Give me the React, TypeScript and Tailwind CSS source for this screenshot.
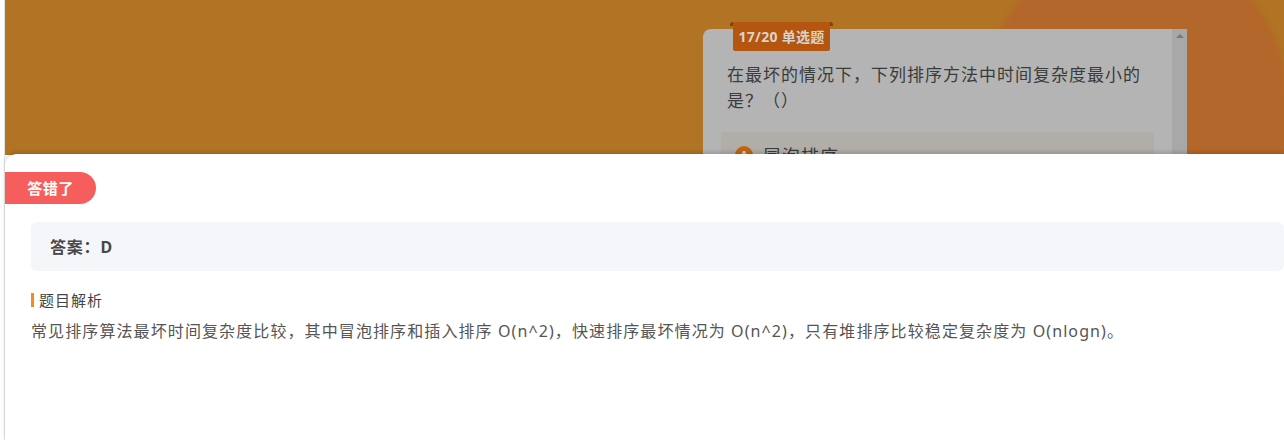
const FONT = "font-['Noto_Sans','Noto_Sans_CJK_SC',sans-serif]";

function QuestionCard() {
  return (
    <div className="relative w-[484px] h-[200px] rounded-tl-lg bg-[#b4b4b4] flex">
      {/* tag ribbon */}
      <div className="absolute left-[30px] -top-[7px] w-[97px] h-[29px] bg-[#b4560f] rounded-b-[2px] flex items-center justify-center">
        <span className="absolute -left-[3px] top-0 w-[3px] h-[4px] bg-[#8a3f0a] rounded-tl-[3px]" />
        <span className="absolute -right-[3px] top-0 w-[3px] h-[4px] bg-[#8a3f0a] rounded-tr-[3px]" />
        <span className="text-[14px] font-bold text-[#d9d3cd] tracking-[0.3px]">17/20 单选题</span>
      </div>
      <div className="flex-1 pt-[33px]">
        <div className="pl-[24px] w-[446px] text-[17px] leading-[26px] tracking-[1px] text-[#3b3b3b]">
          在最坏的情况下，下列排序方法中时间复杂度最小的是？（）
        </div>
        <div className="ml-[18px] mt-[18px] w-[433px] h-[60px] rounded-[4px] bg-[#b1ada8] flex items-start pt-[14px] pl-[14px] gap-[10px]">
          <span className="w-[18px] h-[18px] rounded-full bg-[#c1660f] text-[11px] font-bold text-[#d9d3cd] flex items-center justify-center">A</span>
          <span className="text-[18px] leading-[20px] tracking-[1px] text-[#3b3b3b]">冒泡排序</span>
        </div>
      </div>
      <div className="w-[15px] h-full bg-[#a8a8a8] flex justify-center pt-[5px]">
        <div className="w-0 h-0 border-l-[4px] border-r-[4px] border-b-[4px] border-l-transparent border-r-transparent border-b-[#7a7a7a]" />
      </div>
    </div>
  );
}

export default function App() {
  return (
    <div className={`relative w-[1284px] h-[440px] overflow-hidden bg-white ${FONT}`}>
      <div className="ml-[4px] h-full border-l border-[#e4e4e4] flex flex-col">
        {/* dimmed page behind the result sheet */}
        <div className="relative h-[155px] shrink-0 overflow-hidden bg-[#b07424]">
          <div className="absolute left-[981px] -top-[55px] w-[300px] h-[530px] rounded-full bg-[#b4672a] blur-[2px]" />
          <div className="relative pl-[698px] pt-[29px]">
            <QuestionCard />
          </div>
        </div>

        {/* result sheet */}
        <div className="relative -mt-[1px] flex-1 bg-white rounded-tl-[12px] shadow-[0_-2px_4px_rgba(0,0,0,0.15)] pt-[18px]">
          <div className="w-[91px] h-[32px] bg-[#f65e5e] rounded-r-full flex items-center justify-center">
            <span className="text-[15px] font-bold text-white tracking-[0.5px]">答错了</span>
          </div>

          <div className="ml-[26px] mt-[18px] h-[49px] rounded-[6px] bg-[#f5f6fa] flex items-center pl-[19px]">
            <span className="text-[16px] font-bold text-[#474747] tracking-[0.8px]">答案：D</span>
          </div>

          <div className="ml-[26px] mt-[20px] flex items-center gap-[5px]">
            <span className="w-[3px] h-[14px] bg-[#f58b1f]" />
            <span className="text-[15px] leading-[18px] tracking-[1px] text-[#444]">题目解析</span>
          </div>

          <p className="ml-[26px] mt-[10px] text-[16px] leading-[24px] tracking-[1.1px] text-[#555]">
            常见排序算法最坏时间复杂度比较，其中冒泡排序和插入排序 O(n^2)，快速排序最坏情况为 O(n^2)，只有堆排序比较稳定复杂度为 O(nlogn)。
          </p>
        </div>
      </div>
    </div>
  );
}
